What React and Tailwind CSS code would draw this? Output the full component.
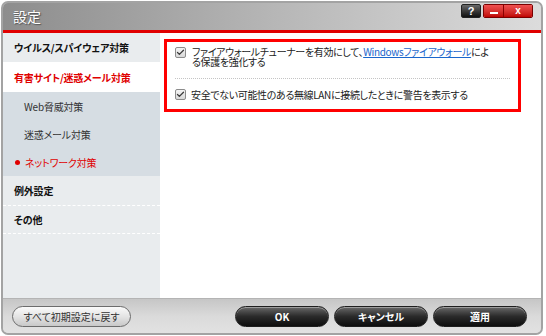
import { Check } from 'lucide-react'

const jp = "font-['Noto_Sans_CJK_JP','Noto_Sans',sans-serif] [font-feature-settings:'palt']"

function Box({ className = '' }) {
  return (
    <span className={`flex w-[11px] h-[11px] shrink-0 items-center justify-center rounded-[2px] border border-[#8c8c8c] bg-gradient-to-b from-[#f4f4f4] to-[#d9d9d9] ${className}`}>
      <Check size={9} strokeWidth={3.5} className="text-[#3c3c3c]" />
    </span>
  )
}

function SideItem({ label, active, bold = true, sub, dot, line, h = 'h-[29px]' }) {
  return (
    <div
      className={`flex items-center ${h} ${sub ? 'pl-[21px]' : 'pl-[11px]'} ${active ? 'bg-white' : ''} ${line ? 'border-b border-dashed border-white' : ''}`}
    >
      {dot && <span className="mr-[5px] -ml-[9px] h-[5px] w-[5px] rounded-full bg-[#e00000]" />}
      <span
        className={`text-[10px] tracking-[-0.2px] ${bold ? 'font-bold' : ''} ${active || dot ? 'text-[#e00000]' : sub ? 'text-[#333]' : 'text-[#111]'}`}
      >
        {label}
      </span>
    </div>
  )
}

function DarkBtn({ label, w }) {
  return (
    <button className={`${w} h-[21px] rounded-full border border-[#1e1e1e] bg-gradient-to-b from-[#6a6a6a] via-[#2a2a2a] to-[#0e0e0e] text-[10px] font-bold text-white shadow-[inset_0_1px_0_rgba(255,255,255,0.35)]`}>
      {label}
    </button>
  )
}

export default function App() {
  return (
    <div className={`w-[546px] h-[336px] bg-white pl-[1px] pt-[1px] ${jp}`}>
      <div className="flex w-[542px] h-[334px] flex-col overflow-hidden rounded-[7px] border-2 border-[#a3a3a3] bg-[#d6d6d6]">
        {/* title bar */}
        <div className="flex h-[27px] shrink-0 items-start bg-gradient-to-r from-[#8d8d8d] via-[#b6b6b6] to-[#dcdcdc]">
          <span className="ml-[10px] mt-[5px] text-[14px] leading-[16px] text-white [text-shadow:0_0_1px_#666,1px_1px_1px_#555]">
            設定
          </span>
          <div className="ml-auto mr-[8px] mt-[1px] flex items-center gap-[2px]">
            <span className="flex h-[14px] w-[20px] items-center justify-center rounded-[2px] border border-[#222] bg-gradient-to-b from-[#6a6a6a] to-[#111] text-[11px] font-bold leading-none text-white font-['Liberation_Sans',sans-serif]">
              ?
            </span>
            <div className="flex h-[14px] overflow-hidden rounded-[2px] border border-[#7a0000]">
              <span className="flex w-[20px] items-center justify-center border-r border-[#8a0000] bg-gradient-to-b from-[#f05050] to-[#c00000]">
                <span className="mt-[3px] h-[2px] w-[8px] bg-white" />
              </span>
              <span className="flex w-[28px] items-center justify-center bg-gradient-to-b from-[#f05050] to-[#c00000] text-[10px] font-bold leading-none text-white font-['Liberation_Sans',sans-serif]">
                x
              </span>
            </div>
          </div>
        </div>
        <div className="h-[3px] shrink-0 bg-[#e00000]" />

        {/* body */}
        <div className="flex h-[265px] shrink-0">
          <div className="flex w-[157px] shrink-0 flex-col bg-[#e9ecee]">
            <SideItem label="ウイルス/スパイウェア対策" />
            <SideItem label="有害サイト/迷惑メール対策" active h="h-[30px]" />
            <div className="bg-[#d6dde3]">
              <SideItem label="Web脅威対策" sub bold={false} h="h-[28px]" />
              <SideItem label="迷惑メール対策" sub bold={false} h="h-[28px]" />
              <SideItem label="ネットワーク対策" sub bold={false} dot h="h-[28px]" />
            </div>
            <SideItem label="例外設定" line h="h-[30px]" />
            <SideItem label="その他" line h="h-[28px]" />
          </div>

          <div className="flex-1 bg-white pl-[4px] pt-[6px]">
            <div className="w-[357px] h-[73px] border-[3px] border-[#ff0000] px-[8px] text-[10px] tracking-[-0.35px] text-[#222]">
              <div className="flex h-[36px] items-start gap-[6px] pt-[5px]">
                <Box />
                <div className="whitespace-nowrap">
                  <div className="h-[10px] leading-[10px]">
                    ファイアウォールチューナーを有効にして、
                    <span className="text-[#1a66cc] underline">Windowsファイアウォール</span>
                    によ
                  </div>
                  <div className="h-[10px] leading-[10px]">る保護を強化する</div>
                </div>
              </div>
              <div className="border-t border-dotted border-[#c4c4c4]" />
              <div className="flex h-[30px] items-center gap-[5px]">
                <Box />
                <span className="whitespace-nowrap">安全でない可能性のある無線LANに接続したときに警告を表示する</span>
              </div>
            </div>
          </div>
        </div>

        {/* bottom bar */}
        <div className="flex flex-1 items-center border-t border-[#b4b4b4] bg-gradient-to-b from-[#c6c6c6] via-[#dadada] to-[#e2e2e2] pl-[9px] pr-[14px]">
          <button className="h-[21px] w-[119px] rounded-full border border-[#6c6c6c] bg-gradient-to-b from-[#fafafa] via-[#e4e4e4] to-[#c8c8c8] text-[10px] text-[#333]">
            すべて初期設定に戻す
          </button>
          <div className="ml-auto flex gap-[5px]">
            <DarkBtn label="OK" w="w-[94px]" />
            <DarkBtn label="キャンセル" w="w-[94px]" />
            <DarkBtn label="適用" w="w-[94px]" />
          </div>
        </div>
      </div>
    </div>
  )
}
